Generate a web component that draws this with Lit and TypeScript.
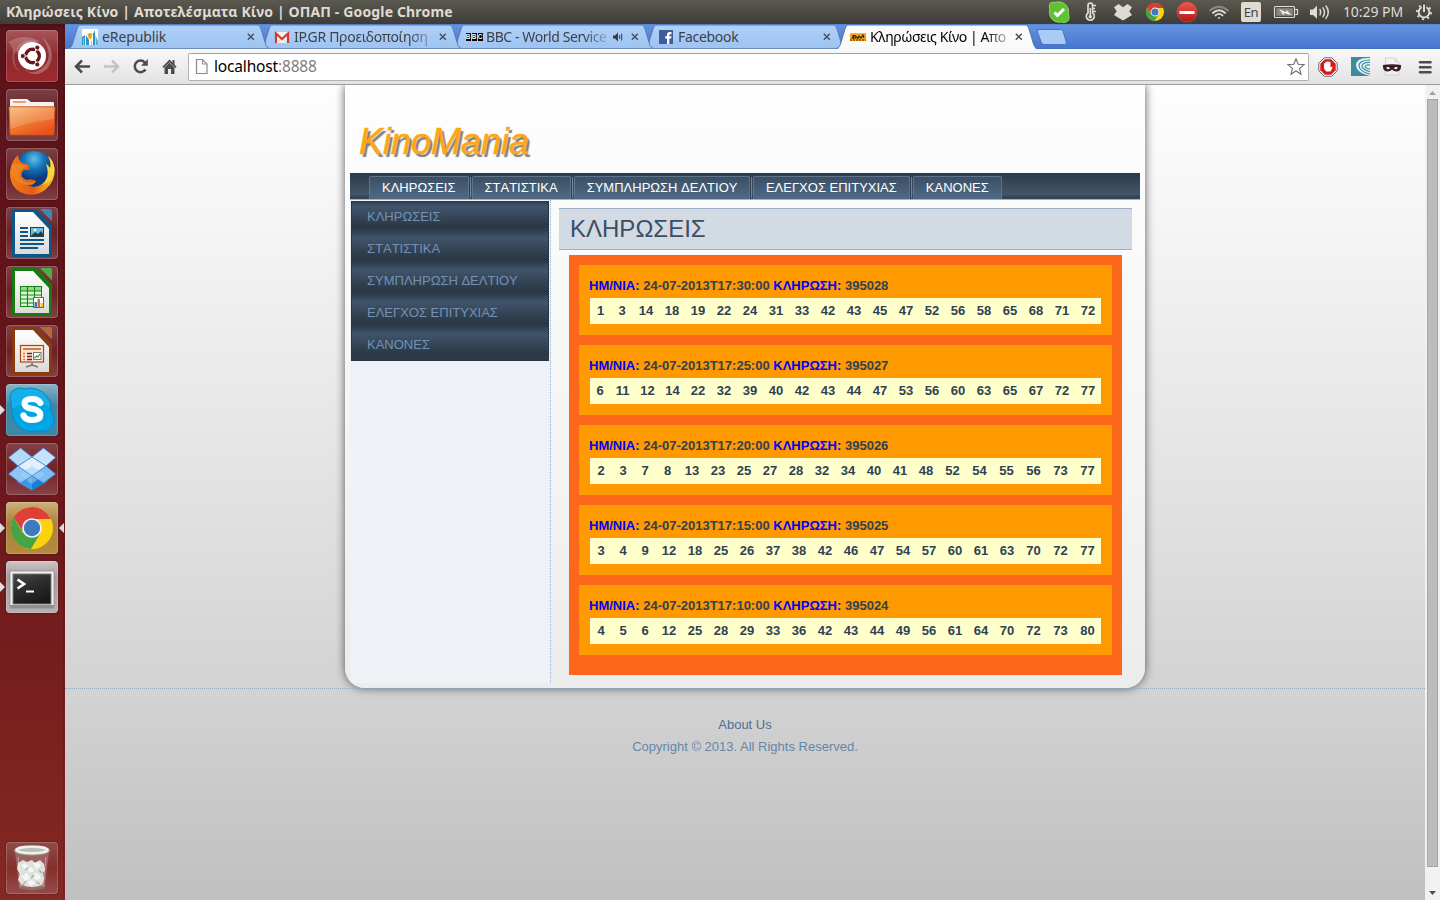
import { LitElement, html, css, nothing, TemplateResult } from "lit";
import { customElement } from "lit/decorators.js";
import { classMap } from "lit/directives/class-map.js";
import { styleMap } from "lit/directives/style-map.js";

type Draw = { date: string; id: number; numbers: number[]; cols: string };

const DRAWS: Draw[] = [
  { date: "24-07-2013T17:30:00", id: 395028, cols: "21px 22px repeat(18, 26px)", numbers: [1, 3, 14, 18, 19, 22, 24, 31, 33, 42, 43, 45, 47, 52, 56, 58, 65, 68, 71, 72] },
  { date: "24-07-2013T17:25:00", id: 395027, cols: "20px repeat(3, 25px) repeat(16, 26px)", numbers: [6, 11, 12, 14, 22, 32, 39, 40, 42, 43, 44, 47, 53, 56, 60, 63, 65, 67, 72, 77] },
  { date: "24-07-2013T17:20:00", id: 395026, cols: "repeat(3, 22px) 23px repeat(10, 26px) repeat(6, 27px)", numbers: [2, 3, 7, 8, 13, 23, 25, 27, 28, 32, 34, 40, 41, 48, 52, 54, 55, 56, 73, 77] },
  { date: "24-07-2013T17:15:00", id: 395025, cols: "repeat(3, 22px) repeat(14, 26px) repeat(3, 27px)", numbers: [3, 4, 9, 12, 18, 25, 26, 37, 38, 42, 46, 47, 54, 57, 60, 61, 63, 70, 72, 77] },
  { date: "24-07-2013T17:10:00", id: 395024, cols: "repeat(3, 22px) repeat(14, 26px) repeat(3, 27px)", numbers: [4, 5, 6, 12, 25, 28, 29, 33, 36, 42, 43, 44, 49, 56, 61, 64, 70, 72, 73, 80] },
];

const MENU = ["ΚΛΗΡΩΣΕΙΣ", "ΣΤΑΤΙΣΤΙΚΑ", "ΣΥΜΠΛΗΡΩΣΗ ΔΕΛΤΙΟΥ", "ΕΛΕΓΧΟΣ ΕΠΙΤΥΧΙΑΣ", "ΚΑΝΟΝΕΣ"];

/* ---------- Top panel indicators ---------- */

const indSkype = html`<svg width="32" height="24" viewBox="0 0 32 24"><path d="M6.500 7C5.500 3 9 1.500 12 2.500C17 .8 24 3 25.500 10C26 13 25 14 26 17C26.500 21.500 22 23.500 18.500 22C12 23 7 19 6.800 14C6 12 7 10 6.500 7Z" fill="#5ec232" stroke="#8be05c" stroke-width="1"/><path d="M11.500 12.500l3 3L21 9" fill="none" stroke="#fff" stroke-width="3"/></svg>`;
const indThermo = html`<svg width="32" height="24" viewBox="0 0 32 24"><path d="M13 13V5.500a2.300 2.300 0 0 1 4.600 0V13a4 4 0 1 1-4.600 0Z" fill="none" stroke="#dfdbd2" stroke-width="1.700"/><path d="M15.300 8v8M18 5.500h3M18 8.500h2M18 11.500h3" stroke="#dfdbd2" stroke-width="1.600"/><circle cx="15.300" cy="16.700" r="1.800" fill="#dfdbd2"/></svg>`;
const indDropbox = html`<svg width="32" height="24" viewBox="0 0 32 24"><path d="M11.500 4L16 7.200L20.500 4L25 7.300L22.300 11.200L25 15L21 17.500L16 20.500L11 17.500L7 15L9.700 11.200L7 7.300Z" fill="#dfdbd2"/></svg>`;
const indChrome = html`<svg width="32" height="24" viewBox="0 0 32 24"><g transform="translate(16 12) scale(.9)"><circle r="10" fill="#fbd20d"/><path d="M-8.700-5A10 10 0 0 1 9-4.500H0L-3.800 2.500Z" fill="#dc3b30"/><path d="M-8.700-5A10 10 0 0 0-.5 10L4 2.500H-4.200Z" fill="#41a447"/><circle r="4.900" fill="#f4f4f4"/><circle r="3.900" fill="#3f7ac4"/></g></svg>`;
const indBlock = html`<svg width="32" height="24" viewBox="0 0 32 24"><defs><linearGradient id="a" x2="0" y2="1"><stop stop-color="#ef5a50"/><stop offset="1" stop-color="#b3140f"/></linearGradient></defs><circle cx="16" cy="12" r="10" fill="url(#a)" stroke="#d8433c" stroke-width=".8"/><rect x="8.500" y="11" width="15" height="3" fill="#fff"/></svg>`;
const indWifi = html`<svg width="32" height="24" viewBox="0 0 32 24" fill="none" stroke-linecap="round"><path d="M7 10.500Q16 3 25 10.500" stroke="#8c8981" stroke-width="1.700"/><path d="M9.800 13Q16 7.500 22.200 13" stroke="#dfdbd2" stroke-width="1.700"/><path d="M12.400 15.500Q16 12.300 19.600 15.500" stroke="#dfdbd2" stroke-width="1.700"/><circle cx="16" cy="18" r="1" fill="#dfdbd2"/></svg>`;
const indBattery = html`<svg width="36" height="24" viewBox="0 0 36 24"><rect x="7.500" y="6.500" width="20" height="11" rx="1" fill="none" stroke="#dfdbd2" stroke-width="1.200"/><rect x="9.300" y="8.300" width="16.500" height="7.500" fill="#8b8881"/><path d="M28.300 9.500h2.200v5h-2.200" fill="none" stroke="#dfdbd2" stroke-width="1.200"/><path d="M12 9l7 3.300l.8-2.300l4.700 5.500l-7-2.500l-.8 2.200Z" fill="#f3f1ec"/></svg>`;
const indVolume = html`<svg width="34" height="24" viewBox="0 0 34 24"><path d="M7 9.500h3l4-3.800v13l-4-3.800H7Z" fill="#dfdbd2"/><path d="M17 9.500q1.600 2.700 0 5.400M20 7.800q3 4.400 0 8.800M23 6q4.600 6.200 0 12.400" fill="none" stroke="#dfdbd2" stroke-width="1.500" stroke-linecap="round"/></svg>`;
const indGear = html`<svg width="31" height="24" viewBox="0 0 31 24" fill="none" stroke="#dfdbd2"><circle cx="15" cy="12.200" r="5.300" stroke-width="1.900"/><circle cx="15" cy="12.200" r="7" stroke-width="2" stroke-dasharray="2 3.500"/><path d="M15 3v9" stroke="#47453f" stroke-width="4.400"/><path d="M15 4.500v7.500" stroke-width="2"/></svg>`;

/* ---------- Launcher icons ---------- */

const icoUbuntu = html`<svg viewBox="0 0 52 52"><path d="M2 12Q20 2 34 12Q14 8 8 26Q8 38 16 44Q4 36 7 22Q6 15 2 12Z" fill="#fff" opacity=".2"/><path d="M16 38Q28 48 40 34Q47 24 36 6Q52 22 42 38Q30 50 16 38Z" fill="#fff" opacity=".26"/><path d="M10 20Q18 6 34 12Q20 10 12 24Z" fill="#fff" opacity=".25"/><circle cx="26" cy="26" r="14" fill="#fff"/><circle cx="26.500" cy="26" r="6.800" fill="none" stroke="#6a161a" stroke-width="3.400"/><path d="M26.500 26H14.500M26.500 26L32.500 15.600M26.500 26L32.500 36.400" stroke="#fff" stroke-width="1.200"/><g fill="#6a161a" stroke="#fff" stroke-width=".9"><circle cx="16.800" cy="26" r="2.500"/><circle cx="31.300" cy="17.600" r="2.500"/><circle cx="31.300" cy="34.400" r="2.500"/></g><circle cx="26.500" cy="26" r="4.900" fill="#fff"/></svg>`;
const icoFiles = html`<svg viewBox="0 0 52 52"><defs><linearGradient id="f" x2=".6" y2="1"><stop stop-color="#f7b878"/><stop offset=".5" stop-color="#f08238"/><stop offset="1" stop-color="#e9531a"/></linearGradient></defs><path d="M4 11q0-1 1-1h16l4 3h22q1 0 1 1v8H4Z" fill="#f4f1ee"/><rect x="7" y="12" width="13" height="2" fill="#f0a070"/><path d="M3 18.500q0-.8 1-.8h44q1 0 1 .8l-1 26q0 1.500-1.500 1.500h-41Q4 46 4 44.500Z" fill="url(#f)" stroke="#d3511a" stroke-width=".8"/><path d="M4 19h44v11Q26 32 4.500 40Z" fill="#fff" opacity=".16"/></svg>`;
const icoFirefox = html`<svg viewBox="0 0 52 52"><defs><radialGradient id="x" cx=".5" cy=".2"><stop stop-color="#5cc3ee"/><stop offset=".5" stop-color="#1674b8"/><stop offset="1" stop-color="#0c3b80"/></radialGradient><linearGradient id="y" x2="1"><stop stop-color="#ef7d1a"/><stop offset=".5" stop-color="#e55a16"/><stop offset="1" stop-color="#f5cf20"/></linearGradient></defs><circle cx="28" cy="23" r="20" fill="url(#x)"/><path d="M12 7Q6 12 4 23Q3 38 15 44.500Q28 50 39 42Q50 33 48.500 20Q47 12 42 8Q46 16 44 20Q42 17 40 16Q45 29 36 36Q28 42 20 36Q27 38 30 33Q25 30 21 32Q14 30 16 24Q18 21 23 22Q25 18 21 16Q17 16 15 14Q12 11 12 7Z" fill="url(#y)"/><path d="M42 8Q46 16 44 20Q42 17 40 16Q45 29 36 37Q47 34 48.500 22Q48 13 42 8Z" fill="#f6e04a" opacity=".75"/><path d="M5 18Q10 14 18 17L22 18L16 21Q10 28 17 33Q22 36 30 33Q26 40 18 36Q5 34 5 18Z" fill="#f08a24" opacity=".7"/></svg>`;
const icoWriter = html`<svg viewBox="0 0 52 52"><defs><linearGradient id="p1" x2="0" y2="1"><stop stop-color="#fff"/><stop offset="1" stop-color="#dadada"/></linearGradient></defs><path d="M8 2H30L46 19V48q0 2-2 2H8q-2 0-2-2V4q0-2 2-2Z" fill="#0e5687"/><path d="M34 2h10q2 0 2 2v10.500Z" fill="#3f87b5"/><path d="M9 5H27L43 22V47H9Z" fill="url(#p1)"/><path d="M14 21h8M14 25h8M14 29h8M14 33h24M14 37h24M14 41h18" stroke="#0e5687" stroke-width="1.800"/><rect x="24.500" y="20.500" width="13" height="9" fill="#6dbbe2" stroke="#0e4468"/><path d="M25 29l4-4l3 2l3-3l2 3v2Z" fill="#333b2c"/><circle cx="29" cy="23" r="1.300" fill="#ffc"/></svg>`;
const icoCalc = html`<svg viewBox="0 0 52 52"><defs><linearGradient id="p2" x2="0" y2="1"><stop stop-color="#fff"/><stop offset="1" stop-color="#dadada"/></linearGradient></defs><path d="M8 2H30L46 19V48q0 2-2 2H8q-2 0-2-2V4q0-2 2-2Z" fill="#187b10"/><path d="M34 2h10q2 0 2 2v10.500Z" fill="#4fae45"/><path d="M9 5H27L43 22V47H9Z" fill="url(#p2)"/><rect x="14.500" y="20.500" width="21" height="20" fill="#d9fbd0" stroke="#18821a"/><path d="M15 21h20v4H15Z" fill="#8fdc83"/><path d="M14.500 25h21M14.500 29h21M14.500 33h21M14.500 37h21M21.500 20.500v20M28.500 20.500v20" stroke="#18821a" stroke-width="1.100"/><rect x="27.500" y="31.500" width="10" height="10" fill="#fff" stroke="#666"/><path d="M28.500 36h2.500v5h-2.500Z" fill="#2385c8"/><path d="M31.500 33h2.500v8h-2.500Z" fill="#e46825"/><path d="M34.500 37h2.500v4h-2.500Z" fill="#f4c92b"/></svg>`;
const icoImpress = html`<svg viewBox="0 0 52 52"><defs><linearGradient id="p3" x2="0" y2="1"><stop stop-color="#fff"/><stop offset="1" stop-color="#dadada"/></linearGradient></defs><path d="M8 2H30L46 19V48q0 2-2 2H8q-2 0-2-2V4q0-2 2-2Z" fill="#8b390d"/><path d="M34 2h10q2 0 2 2v10.500Z" fill="#b5693d"/><path d="M9 5H27L43 22V47H9Z" fill="url(#p3)"/><path d="M26 38v2l-6 2M26 40l6 2" stroke="#777" stroke-width="1.600" fill="none"/><rect x="14.500" y="20.500" width="23" height="16.500" fill="#fde9dc" stroke="#a3471a" stroke-width="1.200"/><path d="M17 24h18" stroke="#e06a2a" stroke-width="1.800"/><path d="M17 28.500h2M17 31.500h2M17 34.500h2" stroke="#e06a2a" stroke-width="1.700"/><path d="M21 28.500h5M21 31.500h5M21 34.500h5" stroke="#6a2b0d" stroke-width="1.700"/><rect x="27.500" y="27.500" width="7.500" height="7" fill="#fff" stroke="#777"/><path d="M28.500 33l2-2l1.500 1l2-3" stroke="#2c9c30" fill="none" stroke-width="1.200"/></svg>`;
const icoSkype = html`<svg viewBox="0 0 52 52"><path d="M5 17C2 8 10 1.500 18 5C34 1 46 13 45 27C53 38 44 50 33 47C17 51 5 39 6 25C4.500 21 4.500 20 5 17Z" fill="#00a5e5" stroke="#0b86be" stroke-width="1"/><path d="M5.500 17C3 8 10 2.500 18 5.500C34 2 44 13 44 24Q28 12 6 25Z" fill="#35bdf0" opacity=".4"/><path d="M34.300 19Q32.500 15 26 15Q18.500 15 18.500 19.500Q18.500 23.500 26 24.800Q34.300 26.300 34.300 31Q34.300 36 26 36Q19 36 17.500 31.500" fill="none" stroke="#fff" stroke-width="6.200" stroke-linecap="round"/></svg>`;
const icoDropbox = html`<svg viewBox="0 0 52 52"><path d="M12 23L26 14L40 23V39L26 47.500L11 39Z" fill="#3f98e4"/><path d="M26 32L40 23L42 38L26 47.500Z" fill="#1c7dd6"/><path d="M14.500 5L26 14L12 23L2.500 14.500Z" fill="#b3d8f8"/><path d="M37.500 5L49.500 14.500L40 23L26 14Z" fill="#c6e1fa"/><path d="M26 14L40 23L26 33L12 23Z" fill="#e3f0fc"/><path d="M12 23L26 33L14.500 40L2.500 31Z" fill="#8ec5f4"/><path d="M40 23L49.500 31L37.500 40L26 33Z" fill="#7dbcf3"/><path d="M26 23L39 31L26 41L13 31Z" fill="#9fd0f8" opacity=".55"/><path d="M14.500 5L26 14L12 23L2.500 14.500ZM37.500 5L49.500 14.500L40 23L26 14ZM12 23L2.500 31L14.500 40L26 33ZM40 23L49.500 31L37.500 40L26 33Z" fill="none" stroke="#3487d6" stroke-width=".8"/></svg>`;
const icoChrome = html`<svg viewBox="0 0 52 52"><g transform="translate(26 26) scale(2.100)"><circle r="10" fill="#fbd20d"/><path d="M-8.700-5A10 10 0 0 1 9-4.300H0L-3.800 2.500Z" fill="#dd4038"/><path d="M-8.700-5A10 10 0 0 0-.5 10L4 2.500H-4.200Z" fill="#45a546"/><circle r="4.700" fill="#f4f4f4"/><circle r="3.900" fill="#3c7bc2"/></g></svg>`;
const icoTerminal = html`<svg viewBox="0 0 52 52"><defs><linearGradient id="t" x2=".5" y2="1"><stop stop-color="#4b4b4b"/><stop offset=".5" stop-color="#2d2d2d"/><stop offset="1" stop-color="#1b1b1b"/></linearGradient></defs><rect x="4" y="10" width="44" height="37" rx="1.500" fill="#f2f2f0" stroke="#8d8d8b" stroke-width=".8"/><path d="M4 44h44v2q0 1-1 1H5q-1 0-1-1Z" fill="#8f8f8c"/><rect x="7" y="13" width="38" height="30" fill="url(#t)" stroke="#777"/><path d="M11.500 18.500l6.500 4.500l-6.500 4.500" fill="none" stroke="#fff" stroke-width="2.700"/><path d="M20 30.500h8" stroke="#fff" stroke-width="2"/></svg>`;
const icoTrash = html`<svg viewBox="0 0 52 52"><path d="M9 10L13 45Q26 49 39 45L43 10Z" fill="#d9c9c6" opacity=".28"/><path d="M12 21l5-3l4 2l5-2l3 3l5-3l4 4l1 6l-2 3l1 6l-2 6q-10 4-20 0l-4-5l2-6l-3-5Z" fill="#dfe1dc"/><path d="M15 23l4-2l3 3l-3 4ZM27 21l5-1l3 4l-5 3ZM16 34l5-3l3 5l-5 3ZM28 31l5 1l2 5l-6 1ZM22 26l4-1l2 4l-5 2ZM21 40l5-2l4 3l-5 3Z" fill="#f6f7f4"/><path d="M19 28l3-2M25 36l3-3M20 39l-3 4M33 28l3 3M30 40l4 2" stroke="#a3a8a1" stroke-width="1.200" fill="none"/><path d="M12 15L15 45M40 15L37 45" stroke="#fff" opacity=".4"/><path d="M13 45Q26 49 39 45V46.500Q26 50 13 46.500Z" fill="#777"/><ellipse cx="26" cy="8.500" rx="18" ry="5" fill="#9ba09a"/><ellipse cx="26" cy="8" rx="15.500" ry="3.200" fill="#b9bdb7" stroke="#eef0ec" stroke-width="2.400"/></svg>`;

type Tile = { kind: string; icon: TemplateResult; running?: boolean; focused?: boolean };
const TILES: Tile[] = [
  { kind: "ubuntu", icon: icoUbuntu },
  { kind: "plain", icon: icoFiles },
  { kind: "plain", icon: icoFirefox },
  { kind: "plain", icon: icoWriter },
  { kind: "plain", icon: icoCalc },
  { kind: "plain", icon: icoImpress },
  { kind: "skype", icon: icoSkype, running: true },
  { kind: "plain", icon: icoDropbox },
  { kind: "gold", icon: icoChrome, running: true, focused: true },
  { kind: "grey", icon: icoTerminal, running: true },
];

/* ---------- Tabs ---------- */

const favRepublik = html`<svg width="16" height="16" viewBox="0 0 16 16"><rect width="16" height="16" fill="#fff"/><path d="M0 16V8l3-2v10ZM4 16V6l3 5v5ZM11 16V5l2-4v15Z" fill="#2b93bd"/><path d="M13.500 16V6l2.500 6v4Z" fill="#57b4cf"/><path d="M5.500 5q3-2 5 0l-1 4l-1.500 1.500L6.500 9Z" fill="#f2a51f"/><path d="M1.500 9v7M9.500 12v4" stroke="#7cc"/></svg>`;
const favGmail = html`<svg width="16" height="16" viewBox="0 0 16 16"><rect x="1" y="3" width="14" height="11" fill="#f5f2f1"/><path d="M2 14V4.500l6 5.500l6-5.500V14" fill="none" stroke="#d5392d" stroke-width="2.200"/><path d="M4 13l3-3M12 13L9 10" stroke="#ccc"/></svg>`;
const favBbc = html`<span class="bbc"><b>B</b><b>B</b><b>C</b></span>`;
const favFacebook = html`<svg width="14" height="14" viewBox="0 0 14 14"><rect width="14" height="14" fill="#3f5c9a"/><path d="M8 14V8.500H6.200V6.300H8V4.600Q8 2 10.600 2H12.500V4.200H11.300Q10.300 4.200 10.300 5.200V6.300H12.500L12.200 8.500H10.300V14Z" fill="#fff"/></svg>`;
const favKino = html`<svg width="16" height="16" viewBox="0 0 16 16"><rect y="4" width="16" height="8" fill="#f9a51a"/><path d="M0 4.500h16" stroke="#e5c41b"/><path d="M2 9.500q2-4 4-2.500M5 9.500l1-2l2 2l1-2.500l2 2l2-3l1 3M3 6l1 4" stroke="#3a2505" fill="none" stroke-width="1.200"/><path d="M0 11h16" stroke="#3d2a0a" stroke-width="1" stroke-dasharray="2 1"/></svg>`;
const speaker = html`<svg class="speaker" width="12" height="12" viewBox="0 0 12 12"><path d="M1 4.500h2L6 1.500v9L3 7.500H1Z" fill="#3c3c3c"/><path d="M7.700 4v4M9.700 2.500v7" stroke="#3c3c3c" stroke-width="1"/></svg>`;
const closeX = html`<svg class="close" width="10" height="10" viewBox="0 0 10 10"><path d="M1.800 1.800l6 6M7.800 1.800l-6 6" stroke="#4a4f57" stroke-width="1.500"/></svg>`;

type Tab = { id: string; title: string; icon: TemplateResult; sound?: boolean; active?: boolean };
const TABS: Tab[] = [
  { id: "t1", title: "eRepublik", icon: favRepublik },
  { id: "t2", title: "IP.GR Προειδοποίηση", icon: favGmail },
  { id: "t3", title: "BBC - World Service", icon: favBbc, sound: true },
  { id: "t4", title: "Facebook", icon: favFacebook },
  { id: "t5", title: "Κληρώσεις Κίνο | Απο", icon: favKino, active: true },
];

@customElement("desktop-panel")
export class DesktopPanel extends LitElement {
  static styles = css`
    :host { display: flex; align-items: center; height: 24px; background: linear-gradient(#5b5a4e 0, #57554d 3px, #3e3d38 23px); color: #dfdbd2; }
    .title { margin-left: 6px; font: bold 14px/24px "Noto Sans", sans-serif; letter-spacing: .15px; white-space: nowrap; flex: 1; }
    svg { display: block; }
    .lang { width: 32px; display: flex; justify-content: center; }
    .lang span { width: 20px; height: 20px; border-radius: 2px; background: #dfdbd2; color: #45433e; font: 13px/21px "Noto Sans", sans-serif; text-align: center; letter-spacing: -.5px; }
    .clock { width: 72px; text-align: center; font: 14px/24px "Noto Sans", sans-serif; white-space: nowrap; letter-spacing: -.05px; }
  `;
  render() {
    return html`<div class="title">Κληρώσεις Κίνο | Αποτελέσματα Κίνο | ΟΠΑΠ - Google Chrome</div>
      ${indSkype}${indThermo}${indDropbox}${indChrome}${indBlock}${indWifi}
      <div class="lang"><span>En</span></div>
      ${indBattery}${indVolume}
      <div class="clock">10:29 PM</div>
      ${indGear}`;
  }
}

@customElement("app-launcher")
export class AppLauncher extends LitElement {
  static styles = css`
    :host { display: flex; flex-direction: column; gap: 7px; box-sizing: border-box; width: 65px; padding: 6px 0 6px 6px; background: linear-gradient(90deg, transparent 63px, #0003 63px, #0001 64px), linear-gradient(#4a0f15 0, #5b131a 5px, #60141a 200px, #6d181d 480px, #7a201f 700px, #842923 876px); }
    .tile { position: relative; width: 52px; height: 52px; box-sizing: border-box; border-radius: 4px; box-shadow: inset 0 0 0 1px #ffffff2e, 0 0 2px #0005; background: linear-gradient(#a8848766, #8a4a4f33 50%, #b0808466); }
    .tile > svg { display: block; width: 52px; height: 52px; }
    .ubuntu { background: linear-gradient(#a8555a, #8d2b2f 50%, #a02a2e); }
    .skype { background: linear-gradient(#8ab5c7, #3f86a5 40%, #3d87a8); }
    .gold { background: linear-gradient(#cdb079, #a8823f 40%, #b48c3c); }
    .grey { background: linear-gradient(#cfc6c8, #a59b9e 30%, #b9b0b2); }
    .trash { margin-top: auto; }
    .running::before, .focused::after { content: ""; position: absolute; top: 21px; border: 5px solid transparent; }
    .running::before { left: -6px; border-left: 5px solid #dedede; border-right: 0; }
    .focused::after { right: -6px; border-right: 5px solid #dedede; border-left: 0; }
  `;
  render() {
    return html`${TILES.map(
      (t) => html`<div class=${classMap({ tile: true, [t.kind]: true, running: !!t.running, focused: !!t.focused })}>${t.icon}</div>`
    )}<div class="tile trash">${icoTrash}</div>`;
  }
}

@customElement("browser-chrome")
export class BrowserChrome extends LitElement {
  static styles = css`
    :host { display: block; font: 14px "Noto Sans", sans-serif; }
    .strip { display: flex; height: 25px; padding-left: 3px; background: linear-gradient(#4a78c8 0, #6493e0 1px, #4777cf 24px, #3d69b8 25px); }
    .tab { position: relative; width: 202px; height: 25px; margin-right: -10px; flex: none; box-sizing: border-box; padding: 0 14px; display: flex; align-items: center; color: #3d4249; }
    .t1 { z-index: 4; } .t2 { z-index: 3; } .t3 { z-index: 2; } .t4 { z-index: 1; }
    .active { z-index: 6; color: #000; }
    .shape { position: absolute; left: 0; top: 0; }
    .fav { position: relative; width: 16px; margin-right: 4px; display: flex; justify-content: center; }
    .title { position: relative; flex: 1; min-width: 0; height: 25px; line-height: 25px; white-space: nowrap; overflow: hidden; margin-right: 5px; letter-spacing: -.1px; }
    .t2 .title, .t3 .title, .t5 .title { -webkit-mask-image: linear-gradient(90deg, #000 calc(100% - 24px), #0003); mask-image: linear-gradient(90deg, #000 calc(100% - 24px), #0003); }
    .t2 .title { letter-spacing: -.3px; }
    .t3 .title { letter-spacing: -.42px; }
    .t4 .title { letter-spacing: -.3px; }
    .t5 .title { letter-spacing: -.4px; }
    .close, .speaker { position: relative; flex: none; }
    .t3 .title { margin-right: 4px; }
    .speaker { margin-right: 6px; }
    .bbc { display: flex; gap: 1px; }
    .bbc b { width: 5px; height: 8px; background: #000; color: #fff; font: bold 6.500px/8px "Liberation Sans", sans-serif; text-align: center; }
    .newtab { margin-left: 6px; }
    .bar { display: flex; align-items: center; height: 36px; box-sizing: border-box; border-bottom: 1px solid #9c9c9c; background: linear-gradient(#f9f9f9, #e2e2e2); padding-left: 3px; }
    .bar svg { display: block; flex: none; }
    .omni { flex: none; margin-left: 4px; width: 1121px; height: 28px; box-sizing: border-box; border: 1px solid #b2b2b2; border-top-color: #a2a2a2; border-radius: 2px; background: #fff; display: flex; align-items: center; padding: 0 3px 0 5px; }
    .url { flex: 1; margin-left: 4px; font-size: 15.500px; line-height: 22px; padding-bottom: 2px; color: #000; letter-spacing: -.17px; }
    .url span { color: #808080; }
    .ext { flex: none; width: 32px; display: flex; justify-content: center; align-items: center; }
    .exts { flex: none; display: flex; margin-left: 3px; }
    .menu { width: 33px; display: flex; justify-content: center; align-items: center; }
  `;
  render() {
    return html`<div class="strip">
        ${TABS.map((t) => html`<div class=${classMap({ tab: true, [t.id]: true, active: !!t.active })}>
          <svg class="shape" width="202" height="25" viewBox="0 0 202 25">
            <defs><linearGradient id="tab" x2="0" y2="1"><stop stop-color="#b0d0f8"/><stop offset="1" stop-color="#9ec3f2"/></linearGradient></defs>
            <path d="M0 24.500C3 24 3.500 22.500 4.500 20L9 5C10 2 10.500 1 13 1H189C191.500 1 192 2 193 5L197.500 20C198.500 22.500 199 24 202 24.500" fill=${t.active ? "#fafafa" : "url(#tab)"} stroke=${t.active ? "#4a6ca6" : "#5478b0"} stroke-width=".9"/>
            ${t.active ? html`<svg><rect x="3" y="24" width="196" height="1" fill="#f9f9f9"/></svg>` : html`<svg><rect y="24" width="202" height="1" fill="#6f8db8"/></svg>`}
          </svg>
          <span class="fav">${t.icon}</span><span class="title">${t.title}</span>${t.sound ? speaker : nothing}${closeX}</div>`)}
        <svg class="newtab" width="36" height="25" viewBox="0 0 36 25"><path d="M3 5.500h23.500q2 0 2.700 2l3 10.500q.5 2.500-1.500 2.500H10q-2 0-2.700-2L3.500 8Q2.500 5.500 5 5.500Z" fill="#a8cbf7" stroke="#4a74bd"/></svg>
      </div>
      <div class="bar">
        <svg width="29" height="34" viewBox="0 0 29 34"><path d="M22 16.500H9M14 10.500l-6 6l6 6" fill="none" stroke="#4c4c4c" stroke-width="2.500"/></svg>
        <svg width="29" height="34" viewBox="0 0 29 34"><path d="M7 16.500h13M15 10.500l6 6l-6 6" fill="none" stroke="#c4c4c4" stroke-width="2.500"/></svg>
        <svg width="29" height="34" viewBox="0 0 29 34"><path d="M19.500 19.500a5.800 5.800 0 1 1-.6-7" fill="none" stroke="#4c4c4c" stroke-width="2.500"/><path d="M21.800 9v6.800H15Z" fill="#4c4c4c"/></svg>
        <svg width="29" height="34" viewBox="0 0 29 34"><path d="M9.500 17.500l5-5l5 5V24h-3.500v-5h-3v5H9.500Z" fill="#4c4c4c"/><path d="M17.500 10h2v5h-2Z" fill="#4c4c4c"/><path d="M8 17.300l6.500-6.500l6.500 6.500" fill="none" stroke="#4c4c4c" stroke-width="1.700"/></svg>
        <div class="omni">
          <svg width="16" height="18" viewBox="0 0 16 18"><path d="M2.500 1.500h6l4.500 4.500v9.500H2.500Z" fill="#fcfcfc" stroke="#8c8c8c" stroke-width="1.200"/><path d="M8.500 1.500V6H13" fill="none" stroke="#8c8c8c"/></svg>
          <div class="url">localhost<span>:8888</span></div>
          <svg width="18" height="18" viewBox="0 0 18 18"><path d="M9 .7l2.200 5.500l5.900.4l-4.500 3.800l1.400 5.800L9 13l-5 3.200l1.400-5.800L.9 6.600l5.900-.4Z" fill="#fff" stroke="#6f6f6f" stroke-width="1.100"/></svg>
        </div>
        <div class="exts">
          <span class="ext"><svg width="20" height="20" viewBox="0 0 20 20"><path d="M6.200.8h7.600L19.200 6.200v7.600L13.800 19.200H6.200L.8 13.800V6.200Z" fill="#fff" stroke="#555" stroke-width=".9"/><path d="M6.800 2.300h6.400l4.500 4.500v6.400l-4.500 4.500H6.800l-4.500-4.500V6.800Z" fill="#d9191c"/><path d="M6 10V6.500q1-1 1.500 0V5q1-1.200 1.700 0q.8-1.500 1.700 0q1-.8 1.600.4V10.500q1.500-1.500 2.200-.3L12.500 14.500H8.200L6 11.500Z" fill="#fff"/></svg></span>
          <span class="ext"><svg width="19" height="19" viewBox="0 0 19 19"><rect width="19" height="19" fill="#3d8b9c"/><path d="M19 1Q5 0 5 9Q6 16 19 19" fill="#e9f3f5"/><path d="M19 3Q8 3 8 9Q9 15 19 17M19 5.500Q11 5 11 9.500Q12 13 19 14.500M19 8Q14 7.500 14 10Q15 11.500 19 12" fill="none" stroke="#3d8b9c" stroke-width="1.200"/></svg></span>
          <span class="ext"><svg width="20" height="20" viewBox="0 0 20 20"><path d="M3.500 1h9l4 4v13h-13Z" fill="#f2f2f2" stroke="#ccc" stroke-width=".8"/><path d="M12.500 1v4h4Z" fill="#d5d5d5"/><path d="M1 8Q10 6.500 19 8Q19.500 14.500 14.500 14.500Q11.500 14.500 10 12.500Q8.500 14.500 5.500 14.500Q.5 14.500 1 8Z" fill="#3b1c20"/><path d="M4 11q2.500-2 4 .5q-2 1.500-4-.5ZM16 11q-2.500-2-4 .5q2 1.500 4-.5Z" fill="#fff"/></svg></span>
          <span class="menu"><svg width="14" height="14" viewBox="0 0 14 14"><path d="M2 2.200h10.500M2 7.200h10.500M2 12.200h10.500" stroke="#4c4c4c" stroke-width="2.600" stroke-linecap="round"/></svg></span>
        </div>
      </div>`;
  }
}

@customElement("kino-page")
export class KinoPage extends LitElement {
  static styles = css`
    :host { display: flex; flex-direction: column; align-items: center; overflow: hidden; background: linear-gradient(#fefefe 0, #f4f4f4 150px, #dedede 460px, #d3d3d3 600px, #c0c0c0 815px); font: 13px "Liberation Sans", Arial, sans-serif; color: #2f4154; }
    .sheet { width: 800px; height: 603px; box-sizing: border-box; padding: 0 5px 5px; border-radius: 0 0 20px 20px; background: linear-gradient(#fefefe, #f6f6f6 50%, #ececec); box-shadow: 0 0 10px #555; display: flex; flex-direction: column; position: relative; }
    .logo { height: 88px; box-sizing: border-box; padding: 36px 0 0 9px; font: italic 36px/41px "Liberation Sans", Arial, sans-serif; color: #fca816; -webkit-text-stroke: .6px #fca816; text-shadow: 2.500px 2.500px 1px #808080; }
    .nav { display: flex; gap: 3px; height: 27px; box-sizing: border-box; padding: 3px 0 0 19px; border-bottom: 1px solid #a0b2c6; background: linear-gradient(#2b3a49, #43566b 22px, #364657 23px, #364657); font-kerning: none; }
    .nav a { box-sizing: border-box; height: 23px; padding: 0 12px; border: 1px solid #5f738a; border-bottom: 0; border-radius: 2px 2px 0 0; background: linear-gradient(#3c4f63, #4f6a87); color: #fff; line-height: 22px; white-space: nowrap; box-shadow: 2px 0 0 -1px #2f3d4c, 3px 0 0 -1px #74869a; }
    .nav a:nth-child(3) { padding-right: 11.500px; }
    .nav a:last-child { box-shadow: none; }
    .cols { flex: 1; display: flex; }
    .side { box-sizing: content-box; padding: 1px 1px 0; width: 198px; background: #eef1f5; border-right: 1px dotted #9bb0c6; border-bottom-left-radius: 3px; }
    .vmenu { border: 1px solid #283643; border-width: 0 1px; font-kerning: none; }
    .vmenu a { display: block; height: 32px; line-height: 31px; padding-left: 15px; color: #7391b3; background: linear-gradient(#36475a 0, #40546b 5px, #2a3744 26px, #2d3c4b 29px, #34465a 32px); }
    .vmenu a:first-child { background: linear-gradient(#283643 0, #36475a 2px, #40546b 6px, #2a3744 26px, #34465a 32px); }
    .vmenu a:last-child { background: linear-gradient(#36475a 0, #40546b 5px, #2a3744 26px, #2d3c4b 30px, #283643 31px); }
    .main { flex: 1; padding: 8px 8px 0; }
    .head { height: 42px; box-sizing: border-box; border: 1px solid #9db0c6; border-width: 1px 0; padding-left: 11px; background: #d2dae4; color: #3b4f66; font-size: 24px; line-height: 40px; }
    .board { margin: 5px 10px 0; height: 420px; box-sizing: border-box; padding: 10px; background: #fb681c; display: flex; flex-direction: column; gap: 10px; }
    .draw { height: 70px; box-sizing: border-box; padding: 13px 11px 0 10px; background: #f90; font-weight: bold; }
    .info { line-height: 16px; height: 20px; white-space: nowrap; }
    .info b { color: #00f; }
    .nums { display: grid; height: 26px; margin-left: 1px; background: #ffc; line-height: 26px; text-align: center; }
    .foot { align-self: stretch; border-top: 1px dotted #93a8be; padding-top: 25px; text-align: center; line-height: 22px; color: #6785a8; position: relative; }
    .foot a { display: block; color: #4f6f94; }
  `;
  render() {
    return html`<div class="sheet">
        <div class="logo">KinoMania</div>
        <nav class="nav">${MENU.map((m) => html`<a>${m}</a>`)}</nav>
        <div class="cols">
          <div class="side"><div class="vmenu">${MENU.map((m) => html`<a>${m}</a>`)}</div></div>
          <div class="main">
            <div class="head">ΚΛΗΡΩΣΕΙΣ</div>
            <div class="board">${DRAWS.map((d) => html`<div class="draw">
              <div class="info"><b>ΗΜ/ΝΙΑ:</b> ${d.date} <b>ΚΛΗΡΩΣΗ:</b> ${d.id}</div>
              <div class="nums" style=${styleMap({ gridTemplateColumns: d.cols })}>${d.numbers.map((n) => html`<span>${n}</span>`)}</div>
            </div>`)}</div>
          </div>
        </div>
      </div>
      <div class="foot"><a>About Us</a>Copyright © 2013. All Rights Reserved.</div>`;
  }
}

@customElement("app-root")
export class AppRoot extends LitElement {
  static styles = css`
    :host { display: flex; flex-direction: column; width: 1440px; height: 900px; overflow: hidden; }
    .desk { flex: 1; display: flex; min-height: 0; }
    .win { flex: 1; display: flex; flex-direction: column; min-width: 0; }
    .view { flex: 1; display: flex; min-height: 0; }
    kino-page { flex: 1; }
    .scroll { width: 15px; background: #f1f1f1; display: flex; flex-direction: column; align-items: center; }
    .scroll svg { display: block; flex: none; }
    .thumb { width: 11px; height: 768px; box-sizing: border-box; border: 1px solid #a6a6a6; background: #bcbcbc; }
  `;
  render() {
    return html`<desktop-panel></desktop-panel>
      <div class="desk">
        <app-launcher></app-launcher>
        <div class="win">
          <browser-chrome></browser-chrome>
          <div class="view">
            <kino-page></kino-page>
            <div class="scroll">
              <svg width="15" height="14" viewBox="0 0 15 14"><path d="M4 10l3.500-4L11 10Z" fill="#a3a3a3"/></svg>
              <div class="thumb"></div>
              <svg width="15" height="33" viewBox="0 0 15 33"><path d="M4 24l3.500 4L11 24Z" fill="#505050"/></svg>
            </div>
          </div>
        </div>
      </div>`;
  }
}
